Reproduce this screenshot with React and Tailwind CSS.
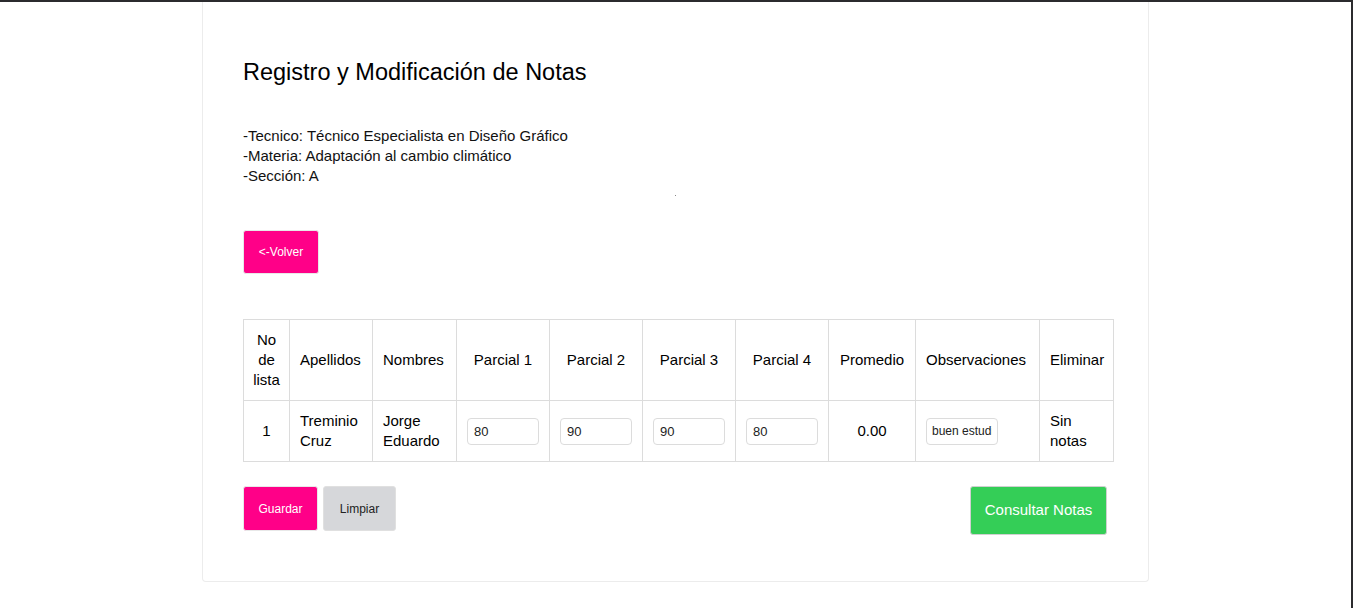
import React from "react";

const font = { fontFamily: '"Liberation Sans", Arial, sans-serif' };

function Grade({ value }) {
  return (
    <input
      defaultValue={value}
      className="w-[72px] h-[27px] border border-[#dcdcdc] rounded-[4px] px-[6px] text-[13px] text-[#222] bg-white outline-none"
      style={font}
    />
  );
}

export default function App() {
  return (
    <div
      className="w-[1353px] h-[608px] bg-white border-t-2 border-r-2 border-[#2b2b2e] overflow-hidden text-black"
      style={font}
    >
      <div className="ml-[202px] w-[947px] h-[580px] border-x border-b border-[#ececec] rounded-b-[4px] pl-[40px] pr-[35px] flex flex-col">
        <h1 className="mt-[56px] text-[23.5px] leading-[28px] font-normal">
          Registro y Modificación de Notas
        </h1>
        <div className="mt-[40px] text-[15px] leading-[20px] text-[#111]">
          <div>-Tecnico: Técnico Especialista en Diseño Gráfico</div>
          <div>-Materia: Adaptación al cambio climático</div>
          <div>-Sección: A</div>
        </div>
        <div className="ml-[432px] mt-[9px] w-px h-px bg-[#888]" />
        <button className="mt-[34px] w-[76px] h-[44px] bg-[#ff0088] text-white text-[12px] rounded-[3px] border border-[#e8e8e8]">
          &lt;-Volver
        </button>
        <table className="mt-[45px] border-collapse table-fixed w-[871px] text-[15px] leading-[20px]">
          <thead>
            <tr className="h-[81px]">
              <th className="w-[46px] border border-[#dcdcdc] font-normal text-center px-0">No<br />de<br />lista</th>
              <th className="w-[83px] border border-[#dcdcdc] font-normal text-left px-[10px]">Apellidos</th>
              <th className="w-[84px] border border-[#dcdcdc] font-normal text-left px-[10px]">Nombres</th>
              <th className="w-[93px] border border-[#dcdcdc] font-normal text-center">Parcial 1</th>
              <th className="w-[93px] border border-[#dcdcdc] font-normal text-center">Parcial 2</th>
              <th className="w-[93px] border border-[#dcdcdc] font-normal text-center">Parcial 3</th>
              <th className="w-[93px] border border-[#dcdcdc] font-normal text-center">Parcial 4</th>
              <th className="w-[87px] border border-[#dcdcdc] font-normal text-center">Promedio</th>
              <th className="w-[124px] border border-[#dcdcdc] font-normal text-left px-[10px]">Observaciones</th>
              <th className="w-[74px] border border-[#dcdcdc] font-normal text-left px-[10px]">Eliminar</th>
            </tr>
          </thead>
          <tbody>
            <tr className="h-[61px]">
              <td className="border border-[#dcdcdc] text-center">1</td>
              <td className="border border-[#dcdcdc] px-[10px]">Treminio<br />Cruz</td>
              <td className="border border-[#dcdcdc] px-[10px]">Jorge<br />Eduardo</td>
              <td className="border border-[#dcdcdc] px-[10px]"><Grade value="80" /></td>
              <td className="border border-[#dcdcdc] px-[10px]"><Grade value="90" /></td>
              <td className="border border-[#dcdcdc] px-[10px]"><Grade value="90" /></td>
              <td className="border border-[#dcdcdc] px-[10px]"><Grade value="80" /></td>
              <td className="border border-[#dcdcdc] text-center">0.00</td>
              <td className="border border-[#dcdcdc] px-[10px]">
                <input
                  defaultValue="buen estudiante"
                  className="w-[72px] h-[27px] border border-[#dcdcdc] rounded-[4px] px-[5px] text-[12px] text-[#222] bg-white outline-none"
                  style={font}
                />
              </td>
              <td className="border border-[#dcdcdc] px-[10px]">Sin<br />notas</td>
            </tr>
          </tbody>
        </table>
        <div className="mt-[24px] flex items-start w-[864px]">
          <button className="w-[75px] h-[45px] bg-[#ff0088] text-white text-[12px] rounded-[3px] border border-[#e8e8e8]">
            Guardar
          </button>
          <button className="ml-[5px] w-[73px] h-[45px] bg-[#d6d7da] text-[#222] text-[12px] rounded-[3px] border border-[#e0e0e0]">
            Limpiar
          </button>
          <button className="ml-auto w-[137px] h-[49px] bg-[#34ce57] text-white text-[15px] rounded-[3px] border border-[#d0d0d0]">
            Consultar Notas
          </button>
        </div>
      </div>
    </div>
  );
}
